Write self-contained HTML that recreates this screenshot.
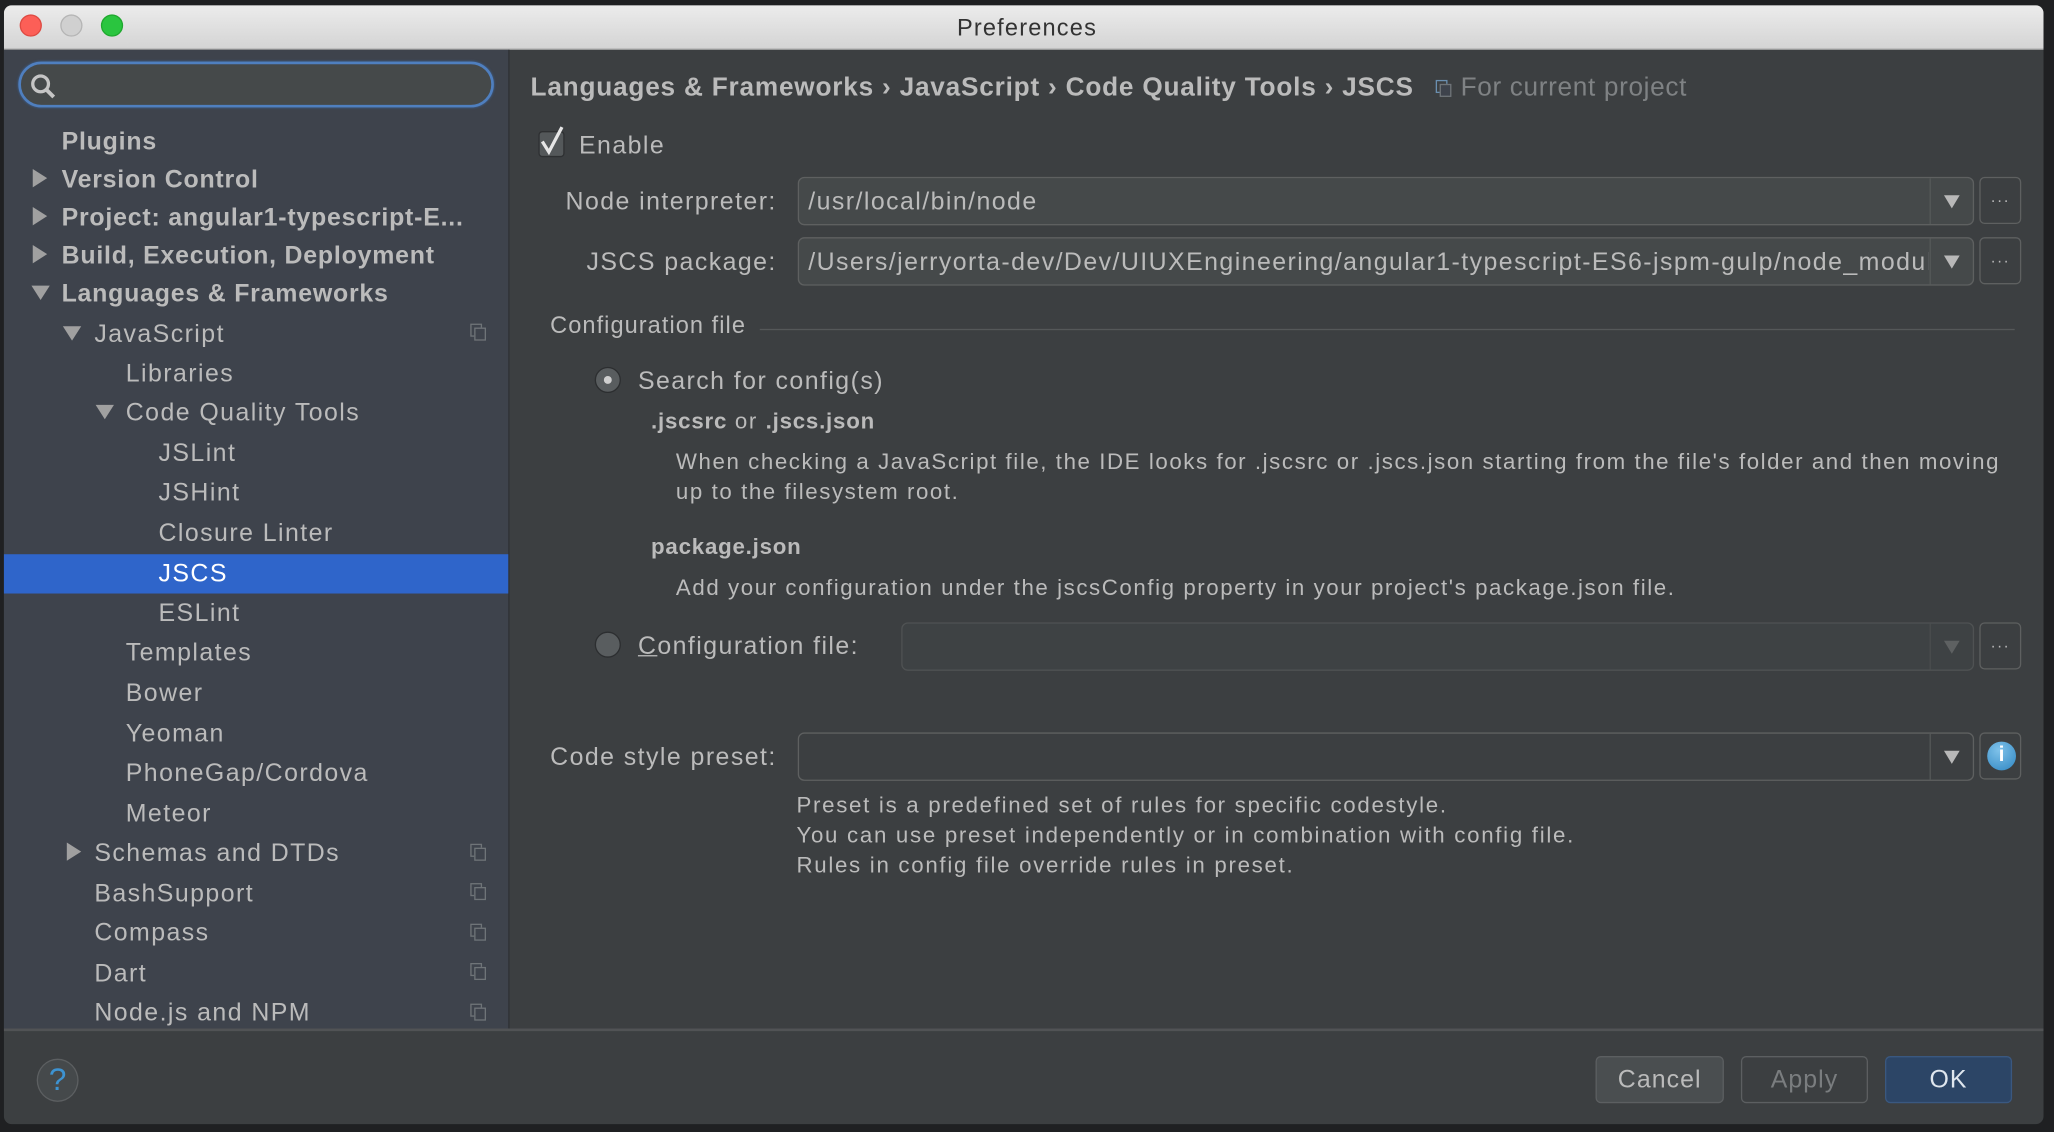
<!DOCTYPE html>
<html><head><meta charset="utf-8"><style>
html,body{margin:0;padding:0;background:#1f2022;width:2054px;height:1132px;overflow:hidden}
#s{position:absolute;left:0;top:0;width:1568px;height:864px;transform:scale(1.30995,1.3102);transform-origin:0 0;font-family:"Liberation Sans",sans-serif;color:#bbbbbb}
.a{position:absolute;white-space:nowrap}
.t{font-size:19px;line-height:24px;letter-spacing:1.1px;margin-top:2px}
.b{font-weight:bold;letter-spacing:0.6px}
.arr{position:absolute;width:0;height:0}
.ar{border-left:11px solid #a0a0a0;border-top:7px solid transparent;border-bottom:7px solid transparent}
.ad{border-top:11px solid #a0a0a0;border-left:7px solid transparent;border-right:7px solid transparent}
.ic{position:absolute;width:9px;height:10px;border:1.5px solid #6f7478;box-sizing:border-box}
.ic:after{content:"";position:absolute;left:2px;top:2px;width:9px;height:10px;border:1.5px solid #6f7478;background:#3e434c;box-sizing:border-box}
.combo{position:absolute;border:1.5px solid #5e6060;border-radius:5px;background:#45494a;box-sizing:border-box}
.combo .dv{position:absolute;right:32px;top:0;bottom:0;border-left:1.5px solid #555858;}
.combo .tri{position:absolute;right:10px;top:13px;border-top:10px solid #b8b8b8;border-left:6px solid transparent;border-right:6px solid transparent;width:0;height:0}
.btn{position:absolute;border:1.5px solid #5e6060;border-radius:4px;box-sizing:border-box}
.dots{position:absolute;width:32px;height:36px;border:1.5px solid #5e6060;border-radius:4px;box-sizing:border-box;text-align:center;font-size:12px;line-height:34px;color:#bbb;letter-spacing:1px}
.d{font-size:17px;line-height:22px;letter-spacing:1.2px;margin-top:1px}
.d b{letter-spacing:0.6px}
.fb{position:absolute;height:36px;border:1.5px solid #5c5f61;border-radius:4px;box-sizing:border-box;text-align:center;font-size:19px;line-height:35px;letter-spacing:0.8px}
</style></head><body><div id="s">
<div class="a" style="left:3px;top:4px;width:1557px;height:854px;background:#3c3f41;border-radius:6px;overflow:hidden">
 <div class="a" style="left:0;top:0;width:1557px;height:33px;background:linear-gradient(#ececec,#d4d4d4);border-bottom:1px solid #b0b0b0"></div>
</div>
<div class="a" style="left:0;top:8px;width:1568px;text-align:center;font-size:18px;line-height:26px;color:#333;letter-spacing:0.9px">Preferences</div>
<div class="a" style="left:15px;top:11px;width:15px;height:15px;border-radius:50%;background:#fc5f57;border:0.5px solid #de4a42"></div>
<div class="a" style="left:46px;top:11px;width:15px;height:15px;border-radius:50%;background:#d0d0d0;border:0.5px solid #b5b5b5"></div>
<div class="a" style="left:77px;top:11px;width:15px;height:15px;border-radius:50%;background:#2ac53f;border:0.5px solid #1fa82e"></div>

<div class="a" style="left:3px;top:38px;width:385px;height:747px;background:#3e434c;border-right:1px solid #2f3135"></div>
<div class="a" style="left:14px;top:47px;width:363px;height:35px;border-radius:18px;background:#45494a;border:2px solid #4f7fbf;box-shadow:0 0 2px #3d6aa8;box-sizing:border-box"></div>
<svg class="a" style="left:22px;top:55px" width="22" height="22"><circle cx="9" cy="9" r="6" stroke="#c5c5c5" stroke-width="2.5" fill="none"/><line x1="13" y1="13" x2="19" y2="19" stroke="#c5c5c5" stroke-width="3"/></svg>

<div class="a" style="left:3px;top:423px;width:385px;height:30px;background:#2f65ca"></div>

<div class="a t b" style="left:47px;top:95px">Plugins</div>
<div class="arr ar" style="left:25px;top:129px"></div><div class="a t b" style="left:47px;top:124px">Version Control</div>
<div class="arr ar" style="left:25px;top:158px"></div><div class="a t b" style="left:47px;top:153px">Project: angular1-typescript-E...</div>
<div class="arr ar" style="left:25px;top:187px"></div><div class="a t b" style="left:47px;top:182px">Build, Execution, Deployment</div>
<div class="arr ad" style="left:24px;top:218px"></div><div class="a t b" style="left:47px;top:211px">Languages &amp; Frameworks</div>
<div class="arr ad" style="left:48px;top:249px"></div><div class="a t" style="left:72px;top:242px">JavaScript</div>
<div class="a t" style="left:96px;top:272px">Libraries</div>
<div class="arr ad" style="left:73px;top:309px"></div><div class="a t" style="left:96px;top:302px">Code Quality Tools</div>
<div class="a t" style="left:121px;top:333px">JSLint</div>
<div class="a t" style="left:121px;top:363px">JSHint</div>
<div class="a t" style="left:121px;top:394px">Closure Linter</div>
<div class="a t" style="left:121px;top:425px;color:#fff">JSCS</div>
<div class="a t" style="left:121px;top:455px">ESLint</div>
<div class="a t" style="left:96px;top:485px">Templates</div>
<div class="a t" style="left:96px;top:516px">Bower</div>
<div class="a t" style="left:96px;top:547px">Yeoman</div>
<div class="a t" style="left:96px;top:577px">PhoneGap/Cordova</div>
<div class="a t" style="left:96px;top:608px">Meteor</div>
<div class="arr ar" style="left:51px;top:643px"></div><div class="a t" style="left:72px;top:638px">Schemas and DTDs</div>
<div class="a t" style="left:72px;top:669px">BashSupport</div>
<div class="a t" style="left:72px;top:699px">Compass</div>
<div class="a t" style="left:72px;top:730px">Dart</div>
<div class="a t" style="left:72px;top:760px">Node.js and NPM</div>
<div class="ic" style="left:359px;top:247px"></div>
<div class="ic" style="left:359px;top:644px"></div>
<div class="ic" style="left:359px;top:674px"></div>
<div class="ic" style="left:359px;top:705px"></div>
<div class="ic" style="left:359px;top:735px"></div>
<div class="ic" style="left:359px;top:766px"></div>

<div class="a b" style="left:405px;top:54px;font-size:20px;line-height:26px;letter-spacing:0.6px">Languages &amp; Frameworks › JavaScript › Code Quality Tools › JSCS</div>
<div class="ic" style="left:1096px;top:61px;border-color:#6a8fb0"></div>
<div class="a" style="left:1115px;top:54px;font-size:20px;line-height:26px;color:#7f8284;letter-spacing:0.5px">For current project</div>

<div class="a" style="left:411px;top:100px;width:20px;height:20px;border-radius:3px;background:#54585a;border:1px solid #2e3032;box-sizing:border-box"></div>
<svg class="a" style="left:410px;top:95px" width="24" height="26"><path d="M4 13 L9 21 L19 2" stroke="#e6e6e6" stroke-width="2.5" fill="none"/></svg>
<div class="a t" style="left:442px;top:98px">Enable</div>

<div class="a t" style="left:392px;width:201px;text-align:right;top:141px">Node interpreter:</div>
<div class="combo" style="left:609px;top:135px;width:898px;height:37px"><div class="dv"></div><div class="tri"></div></div>
<div class="a t" style="left:617px;top:141px">/usr/local/bin/node</div>
<div class="dots" style="left:1511px;top:135px">···</div>

<div class="a t" style="left:392px;width:201px;text-align:right;top:187px">JSCS package:</div>
<div class="combo" style="left:609px;top:181px;width:898px;height:37px"><div class="dv"></div><div class="tri"></div></div>
<div class="a t" style="left:617px;top:187px;width:855px;overflow:hidden">/Users/jerryorta-dev/Dev/UIUXEngineering/angular1-typescript-ES6-jspm-gulp/node_modules/jscs</div>
<div class="dots" style="left:1511px;top:181px">···</div>

<div class="a" style="left:420px;top:236px;font-size:18px;line-height:24px;letter-spacing:0.8px">Configuration file</div>
<div class="a" style="left:580px;top:251px;width:958px;height:1px;background:#555859"></div>

<div class="a" style="left:454px;top:280px;width:20px;height:20px;border-radius:50%;background:#595d5f;border:1px solid #2c2e30;box-sizing:border-box"></div>
<div class="a" style="left:461px;top:287px;width:6px;height:6px;border-radius:50%;background:#cfcfcf"></div>
<div class="a t" style="left:487px;top:278px">Search for config(s)</div>
<div class="a d" style="left:497px;top:310px"><b>.jscsrc</b> or <b>.jscs.json</b></div>
<div class="a d" style="left:516px;top:341px">When checking a JavaScript file, the IDE looks for .jscsrc or .jscs.json starting from the file's folder and then moving</div>
<div class="a d" style="left:516px;top:364px">up to the filesystem root.</div>
<div class="a d" style="left:497px;top:406px"><b>package.json</b></div>
<div class="a d" style="left:516px;top:437px">Add your configuration under the jscsConfig property in your project's package.json file.</div>

<div class="a" style="left:454px;top:482px;width:20px;height:20px;border-radius:50%;background:#595d5f;border:1px solid #2c2e30;box-sizing:border-box"></div>
<div class="a t" style="left:487px;top:480px"><u>C</u>onfiguration file:</div>
<div class="combo" style="left:688px;top:475px;width:819px;height:37px;background:#3e4244;border-color:#4f5253"><div class="dv" style="border-color:#4a4d4e"></div><div class="tri" style="border-top-color:#5e6162"></div></div>
<div class="dots" style="left:1511px;top:475px">···</div>

<div class="a t" style="left:420px;top:565px">Code style preset:</div>
<div class="combo" style="left:609px;top:559px;width:898px;height:37px;background:#3c3f41"><div class="dv"></div><div class="tri"></div></div>
<div class="btn" style="left:1511px;top:559px;width:32px;height:36px"></div>
<div class="a" style="left:1517px;top:566px;width:22px;height:22px;border-radius:50%;background:radial-gradient(circle at 40% 30%,#7fc2ea,#2f86c2);text-align:center;color:#fff;font-weight:bold;font-size:16px;line-height:22px">i</div>

<div class="a d" style="left:608px;top:603px;letter-spacing:1.3px">Preset is a predefined set of rules for specific codestyle.</div>
<div class="a d" style="left:608px;top:626px;letter-spacing:1.3px">You can use preset independently or in combination with config file.</div>
<div class="a d" style="left:608px;top:649px;letter-spacing:1.3px">Rules in config file override rules in preset.</div>

<div class="a" style="left:3px;top:785px;width:1557px;height:2px;background:#515355"></div>
<div class="a" style="left:28px;top:808px;width:32px;height:33px;border-radius:50%;background:#45494b;border:1px solid #5c5f61;box-sizing:border-box;text-align:center;color:#3d93d2;font-size:24px;line-height:32px">?</div>
<div class="fb" style="left:1218px;top:806px;width:98px;background:#4a4e50">Cancel</div>
<div class="fb" style="left:1329px;top:806px;width:97px;background:#3c3f41;color:#7a7d7f">Apply</div>
<div class="fb" style="left:1439px;top:806px;width:97px;background:#2c4566;border-color:#3a5880;color:#dfe6ee">OK</div>
</div></body></html>
